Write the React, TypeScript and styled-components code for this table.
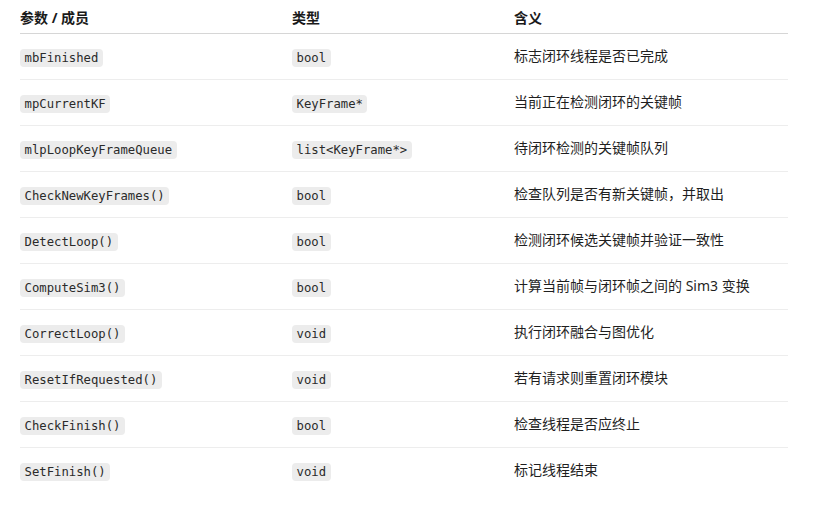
import React from "react";
import styled, { createGlobalStyle } from "styled-components";

const Global = createGlobalStyle`
  html, body { margin: 0; padding: 0; background: #ffffff; }
  body { font-family: "Noto Sans", "Noto Sans CJK SC", sans-serif; color: #1f1f1f; }
`;

const Table = styled.div`
  width: 768px;
  margin-left: 20px;
  display: grid;
  grid-template-columns: 272px 222px 1fr;
`;

const HeadCell = styled.div`
  height: 33px;
  border-bottom: 1px solid #d6d6d6;
  display: flex;
  align-items: center;
  font-size: 14px;
  font-weight: 700;
  color: #1a1a1a;
  font-family: "Noto Sans", "Noto Sans CJK SC", sans-serif;
`;

const Cell = styled.div<{ $last?: boolean }>`
  height: 45px;
  border-bottom: 1px solid ${(p) => (p.$last ? "transparent" : "#ededed")};
  display: flex;
  align-items: center;
  font-size: 14px;
  color: #1f1f1f;
  font-family: "Noto Sans", "Noto Sans CJK SC", sans-serif;
`;

const Line = styled.span`
  display: block;
  line-height: 20px;
  margin-top: -1px;
`;

const Code = styled.code`
  font-family: "DejaVu Sans Mono", "Liberation Mono", monospace;
  font-size: 12.25px;
  padding: 2px 4.5px;
  background: #ececec;
  border-radius: 4px;
  color: #2a2a2a;
  position: relative;
  top: 1px;
`;

const rows: [string, string, string][] = [
  ["mbFinished", "bool", "标志闭环线程是否已完成"],
  ["mpCurrentKF", "KeyFrame*", "当前正在检测闭环的关键帧"],
  ["mlpLoopKeyFrameQueue", "list<KeyFrame*>", "待闭环检测的关键帧队列"],
  ["CheckNewKeyFrames()", "bool", "检查队列是否有新关键帧，并取出"],
  ["DetectLoop()", "bool", "检测闭环候选关键帧并验证一致性"],
  ["ComputeSim3()", "bool", "计算当前帧与闭环帧之间的 Sim3 变换"],
  ["CorrectLoop()", "void", "执行闭环融合与图优化"],
  ["ResetIfRequested()", "void", "若有请求则重置闭环模块"],
  ["CheckFinish()", "bool", "检查线程是否应终止"],
  ["SetFinish()", "void", "标记线程结束"],
];

export default function App() {
  return (
    <>
      <Global />
      <Table>
        <HeadCell>参数 / 成员</HeadCell>
        <HeadCell>类型</HeadCell>
        <HeadCell>含义</HeadCell>
        {rows.map(([name, type, desc], i) => {
          const last = i === rows.length - 1;
          return (
            <React.Fragment key={name}>
              <Cell $last={last}><Line><Code>{name}</Code></Line></Cell>
              <Cell $last={last}><Line><Code>{type}</Code></Line></Cell>
              <Cell $last={last}><Line>{desc}</Line></Cell>
            </React.Fragment>
          );
        })}
      </Table>
    </>
  );
}
